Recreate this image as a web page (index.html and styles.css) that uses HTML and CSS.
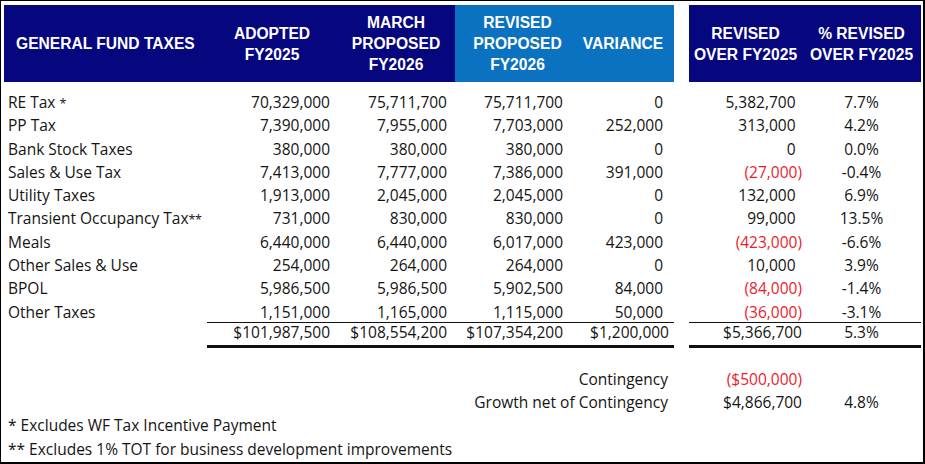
FILE: index.html
```html
<!DOCTYPE html>
<html lang="en">
<head>
<meta charset="utf-8">
<title>General Fund Taxes</title>
<link rel="stylesheet" href="styles.css">
</head>
<body>
<div class="sheet">
  <table class="tax">
    <colgroup>
      <col class="w-label">
      <col class="w-adopted">
      <col class="w-march">
      <col class="w-revised">
      <col class="w-variance">
      <col class="w-gap">
      <col class="w-over">
      <col class="w-pct">
    </colgroup>
    <thead>
      <tr class="head">
        <th class="navy h-label">GENERAL FUND TAXES</th>
        <th class="navy">ADOPTED<br>FY2025</th>
        <th class="navy">MARCH<br>PROPOSED<br>FY2026</th>
        <th class="blue">REVISED<br>PROPOSED<br>FY2026</th>
        <th class="blue h-var">VARIANCE</th>
        <th class="gap"></th>
        <th class="navy">REVISED<br>OVER FY2025</th>
        <th class="navy">% REVISED<br>OVER FY2025</th>
      </tr>
    </thead>
    <tbody>
      <tr class="row first">
        <td class="label">RE Tax <span class="ast">*</span></td><td class="c2">70,329,000</td><td class="c3">75,711,700</td><td class="c4">75,711,700</td><td class="c5">0</td><td></td><td class="c7 sp">5,382,700</td><td class="c8">7.7%</td>
      </tr>
      <tr class="row">
        <td class="label">PP Tax</td><td class="c2">7,390,000</td><td class="c3">7,955,000</td><td class="c4">7,703,000</td><td class="c5">252,000</td><td></td><td class="c7 sp">313,000</td><td class="c8">4.2%</td>
      </tr>
      <tr class="row">
        <td class="label">Bank Stock Taxes</td><td class="c2">380,000</td><td class="c3">380,000</td><td class="c4">380,000</td><td class="c5">0</td><td></td><td class="c7 sp">0</td><td class="c8">0.0%</td>
      </tr>
      <tr class="row">
        <td class="label">Sales &amp; Use Tax</td><td class="c2">7,413,000</td><td class="c3">7,777,000</td><td class="c4">7,386,000</td><td class="c5">391,000</td><td></td><td class="c7 neg">(27,000)</td><td class="c8">-0.4%</td>
      </tr>
      <tr class="row">
        <td class="label">Utility Taxes</td><td class="c2">1,913,000</td><td class="c3">2,045,000</td><td class="c4">2,045,000</td><td class="c5">0</td><td></td><td class="c7 sp">132,000</td><td class="c8">6.9%</td>
      </tr>
      <tr class="row">
        <td class="label">Transient Occupancy Tax<span class="ast">**</span></td><td class="c2">731,000</td><td class="c3">830,000</td><td class="c4">830,000</td><td class="c5">0</td><td></td><td class="c7 sp">99,000</td><td class="c8">13.5%</td>
      </tr>
      <tr class="row">
        <td class="label">Meals</td><td class="c2">6,440,000</td><td class="c3">6,440,000</td><td class="c4">6,017,000</td><td class="c5">423,000</td><td></td><td class="c7 neg">(423,000)</td><td class="c8">-6.6%</td>
      </tr>
      <tr class="row">
        <td class="label">Other Sales &amp; Use</td><td class="c2">254,000</td><td class="c3">264,000</td><td class="c4">264,000</td><td class="c5">0</td><td></td><td class="c7 sp">10,000</td><td class="c8">3.9%</td>
      </tr>
      <tr class="row">
        <td class="label">BPOL</td><td class="c2">5,986,500</td><td class="c3">5,986,500</td><td class="c4">5,902,500</td><td class="c5">84,000</td><td></td><td class="c7 neg">(84,000)</td><td class="c8">-1.4%</td>
      </tr>
      <tr class="row">
        <td class="label">Other Taxes</td><td class="c2">1,151,000</td><td class="c3">1,165,000</td><td class="c4">1,115,000</td><td class="c5">50,000</td><td></td><td class="c7 neg">(36,000)</td><td class="c8">-3.1%</td>
      </tr>
      <tr class="total">
        <td class="label plain"></td><td class="c2 ruled">$101,987,500</td><td class="c3 ruled">$108,554,200</td><td class="c4 ruled">$107,354,200</td><td class="c5 ruled tot-var">$1,200,000</td><td class="plain"></td><td class="c7 ruled">$5,366,700</td><td class="c8 ruled">5.3%</td>
      </tr>
      <tr class="row cont">
        <td class="cont-label" colspan="5">Contingency</td><td></td><td class="c7 neg">($500,000)</td><td class="c8"></td>
      </tr>
      <tr class="row">
        <td class="cont-label" colspan="5">Growth net of Contingency</td><td></td><td class="c7">$4,866,700</td><td class="c8">4.8%</td>
      </tr>
    </tbody>
  </table>
  <div class="notes">
    <p class="note">* Excludes WF Tax Incentive Payment</p>
    <p class="note">** Excludes 1% TOT for business development improvements</p>
  </div>
</div>
</body>
</html>
```

FILE: styles.css
```css
* { box-sizing: border-box; }

html, body {
  margin: 0;
  padding: 0;
  background: #ffffff;
}

.sheet {
  width: 925px;
  height: 464px;
  overflow: hidden;
  background: #ffffff;
  border-top: 1px solid #000;
  border-left: 1px solid #000;
  border-right: 2px solid #000;
  border-bottom: 2px solid #000;
  padding: 4px 2px 0 3px;
  font-family: "Open Sans", "Lato", sans-serif;
  font-size: 15.5px;
  color: #141414;
}

.tax {
  width: 917px;
  table-layout: fixed;
  border-collapse: separate;
  border-spacing: 0;
}

.w-label { width: 203px; }
.w-adopted { width: 130px; }
.w-march { width: 118px; }
.w-revised { width: 125px; }
.w-variance { width: 94px; }
.w-gap { width: 15px; }
.w-over { width: 113px; }
.w-pct { width: 119px; }

/* header */
.head th {
  height: 77px;
  padding: 0;
  font-family: "Liberation Sans", Arial, sans-serif;
  font-weight: bold;
  font-size: 15.6px;
  line-height: 21px;
  color: #ffffff;
  text-align: center;
  vertical-align: middle;
  white-space: nowrap;
}
.head .navy { background: #06067f; }
.head .blue { background: #0b72c2; }
.head .gap { background: #ffffff; }
.head .h-label { text-align: left; padding-left: 12px; }
.head .h-var { padding-right: 8px; }

/* body rows */
.row td {
  padding: 3.3px 0 0 0;
  line-height: 20px;
  white-space: nowrap;
  text-align: right;
}
.row.first td { padding-top: 10px; }
.row.cont td { padding-top: 21.3px; }

.row td.label { text-align: left; padding-left: 4px; }

.ast {
  font-size: 12.5px;
  line-height: 0;
  letter-spacing: -0.5px;
}

.c2 { padding-right: 7px !important; }
.c3 { padding-right: 8px !important; }
.c4 { padding-right: 17px !important; }
.c5 { padding-right: 11px !important; }
.c7 { padding-right: 0; }
.c7.sp { padding-right: 6.5px !important; }
.row td.c8, .total td.c8 { text-align: center; }

.neg { color: #ec1c2c; }

.cont-label { padding-right: 6px !important; }

/* total row */
.total td {
  padding: 0 0 3px 0;
  line-height: 19px;
  text-align: right;
  white-space: nowrap;
}
.total td.ruled {
  border-top: 1px solid #111;
  border-bottom: 3px solid #111;
}
.total td.plain {
  border-top: 1px solid transparent;
  border-bottom: 3px solid transparent;
}
.total .tot-var { padding-right: 5px !important; }

/* footnotes */
.notes {
  margin-top: 2px;
}
.note {
  margin: 0;
  padding-left: 4px;
  line-height: 23.3px;
  white-space: nowrap;
}
```
